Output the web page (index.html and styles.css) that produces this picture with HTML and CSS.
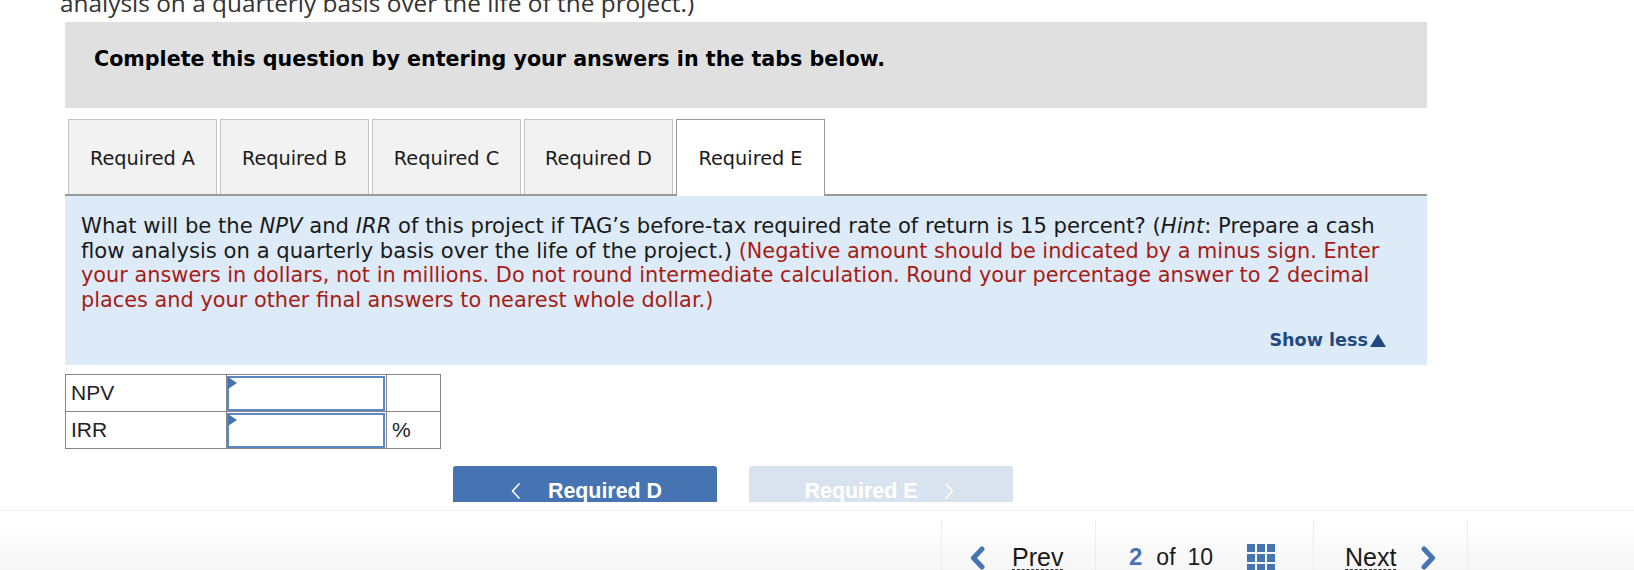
FILE: index.html
```html
<!DOCTYPE html>
<html lang="en">
<head>
  <meta charset="UTF-8" />
  <title>Required E</title>
  <link rel="stylesheet" href="styles.css">
</head>
<body>
  <div class="content">
    <p class="cutoff">analysis on a quarterly basis over the life of the project.)</p>

    <div class="instruction">Complete this question by entering your answers in the tabs below.</div>

    <ul class="tabs">
      <li class="tab">Required A</li>
      <li class="tab">Required B</li>
      <li class="tab">Required C</li>
      <li class="tab">Required D</li>
      <li class="tab active">Required E</li>
    </ul>

    <section class="question">
      <p>What will be the <em>NPV</em> and <em>IRR</em> of this project if TAG’s before-tax required rate of return is 15 percent? (<em>Hint</em>: Prepare a cash flow analysis on a quarterly basis over the life of the project.) <span class="note">(Negative amount should be indicated by a minus sign. Enter your answers in dollars, not in millions. Do not round intermediate calculation. Round your percentage answer to 2 decimal places and your other final answers to nearest whole dollar.)</span></p>
      <div class="show-less">Show less<span class="arrow"></span></div>
    </section>

    <table class="answers">
      <tr>
        <td class="label">NPV</td>
        <td class="cell-input"><div class="input-box"></div></td>
        <td class="unit"></td>
      </tr>
      <tr>
        <td class="label">IRR</td>
        <td class="cell-input"><div class="input-box"></div></td>
        <td class="unit">%</td>
      </tr>
    </table>

    <div class="step-buttons">
      <div class="step-btn back">
        <svg class="step-icon" width="10" height="18" viewBox="0 0 10 18"><path d="M8.5 1.5 1.5 9l7 7.5" fill="none" stroke="#fff" stroke-width="1.6"/></svg>
        <span>Required D</span>
      </div>
      <div class="step-btn disabled">
        <span>Required E</span>
        <svg class="step-icon" width="10" height="18" viewBox="0 0 10 18"><path d="M1.5 1.5 8.5 9l-7 7.5" fill="none" stroke="#fff" stroke-width="1.6"/></svg>
      </div>
    </div>
  </div>

  <footer class="pager">
    <div class="pager-item prev">
      <svg class="chevron" width="15" height="24" viewBox="0 0 15 24"><path d="M12 3 3.5 12 12 21" fill="none" stroke="#4674b3" stroke-width="5" stroke-linecap="round" stroke-linejoin="round"/></svg>
      <span class="pager-link">Prev</span>
    </div>
    <div class="pager-item count">
      <span class="current">2</span><span class="of">of</span><span class="total">10</span>
      <div class="grid-icon">
        <i></i><i></i><i></i><i></i><i></i><i></i><i></i><i></i><i></i>
      </div>
    </div>
    <div class="pager-item next">
      <span class="pager-link">Next</span>
      <svg class="chevron" width="15" height="24" viewBox="0 0 15 24"><path d="M3 3 11.5 12 3 21" fill="none" stroke="#4674b3" stroke-width="5" stroke-linecap="round" stroke-linejoin="round"/></svg>
    </div>
  </footer>
</body>
</html>
```

FILE: styles.css
```css
* {
  box-sizing: border-box;
}
html, body {
  margin: 0;
  padding: 0;
  height: 570px;
  overflow: hidden;
  background-color: #fff;
}
body {
  display: flex;
  flex-direction: column;
  color: #1a1a1a;
  font-family: "DejaVu Sans", Verdana, sans-serif;
}
.content {
  height: 510px;
  padding-left: 65px;
  width: 1427px;
}
.cutoff {
  margin: -9px 0 0 -5px;
  height: 31px;
  line-height: 24px;
  font-family: "Open Sans", sans-serif;
  font-size: 24.4px;
  white-space: nowrap;
  color: #333;
}
.instruction {
  height: 86px;
  padding: 25px 29px;
  background-color: #e0e0e0;
  color: #000;
  font-size: 20.65px;
  line-height: 24px;
  font-weight: 700;
}
.tabs {
  display: flex;
  gap: 3px;
  list-style: none;
  margin: 11px 0 0;
  padding: 0 0 0 3px;
  height: 77px;
  border-bottom: 2px solid #999;
}
.tab {
  width: 149px;
  height: 75px;
  padding-top: 27px;
  text-align: center;
  font-size: 19.3px;
  line-height: 24px;
  background-color: #f2f2f2;
  border: 1px solid #c4c4c4;
  border-bottom: none;
}
.tab.active {
  height: 77px;
  background-color: #fff;
  border-color: #999;
}
.question {
  height: 169px;
  padding: 18px 16px 0;
  background-color: #ddeaf8;
  font-size: 21.15px;
  line-height: 24.6px;
}
.question p {
  margin: 0;
  height: 114px;
}
.note {
  color: #a61c14;
  font-size: 20.85px;
}
.show-less {
  display: flex;
  align-items: center;
  justify-content: flex-end;
  padding-right: 25px;
  color: #22497f;
  font-size: 17.6px;
  font-weight: 700;
  line-height: 24px;
}
.arrow {
  width: 0;
  height: 0;
  margin-left: 2px;
  border-left: 8px solid transparent;
  border-right: 8px solid transparent;
  border-bottom: 13px solid #22497f;
}
.answers {
  margin-top: 9px;
  width: 376px;
  height: 75px;
  border-collapse: collapse;
  table-layout: fixed;
  font-family: "Liberation Sans", Arial, sans-serif;
  font-size: 21px;
  color: #222;
}
.answers td {
  border: 1px solid #858585;
  padding: 0;
}
.label {
  width: 161px;
  padding-left: 5px !important;
}
.cell-input {
  width: 160px;
}
.unit {
  padding-left: 5px !important;
}
.input-box {
  position: relative;
  height: 35px;
  margin-right: 1px;
  border: 2px solid #5b88c4;
  background-color: #fff;
}
.input-box::before {
  content: "";
  position: absolute;
  top: -1px;
  left: -1px;
  border-top: 6px solid transparent;
  border-bottom: 6px solid transparent;
  border-left: 9px solid #4674b3;
}
.step-buttons {
  display: flex;
  gap: 32px;
  margin: 17px 0 0 388px;
  height: 36px;
  overflow: hidden;
}
.step-btn {
  display: flex;
  justify-content: center;
  align-items: flex-start;
  gap: 27px;
  width: 264px;
  height: 50px;
  padding-top: 13px;
  border-radius: 3px 3px 0 0;
  background-color: #4674b3;
  color: #fff;
  font-family: "Liberation Sans", Arial, sans-serif;
  font-size: 21.4px;
  font-weight: 700;
  line-height: 24px;
}
.step-btn.back {
  padding-left: 3px;
}
.step-btn.disabled {
  padding-right: 3px;
  background-color: #d9e3ef;
}
.step-icon {
  margin-top: 3px;
}
.pager {
  display: flex;
  height: 60px;
  padding: 9px 0 0 941px;
  border-top: 1px solid #efefef;
  background: linear-gradient(#fff 20%, #f6f6f6);
  font-family: "Liberation Sans", Arial, sans-serif;
  font-size: 25px;
  color: #1a1a1a;
}
.pager-item {
  display: flex;
  align-items: flex-start;
  height: 60px;
  padding-top: 22px;
  border-left: 1px solid #ececec;
}
.prev {
  width: 154px;
  gap: 27px;
  padding-left: 28px;
}
.count {
  width: 218px;
  padding-left: 33px;
}
.next {
  width: 155px;
  gap: 25px;
  padding-left: 31px;
  border-right: 1px solid #ececec;
}
.chevron {
  margin-top: 4px;
}
.pager-link {
  height: 28px;
  line-height: 30px;
  border-bottom: 1px dashed #333;
}
.count span {
  line-height: 30px;
}
.count .current {
  color: #4674b3;
  font-size: 24px;
  font-weight: 700;
}
.count .of {
  margin-left: 14px;
  font-size: 23px;
}
.count .total {
  margin-left: 12px;
  font-size: 23px;
}
.grid-icon {
  display: grid;
  grid-template-columns: repeat(3, 8px);
  grid-auto-rows: 8px;
  gap: 2px;
  margin: 2px 0 0 34px;
}
.grid-icon i {
  background-color: #4674b3;
}
```
